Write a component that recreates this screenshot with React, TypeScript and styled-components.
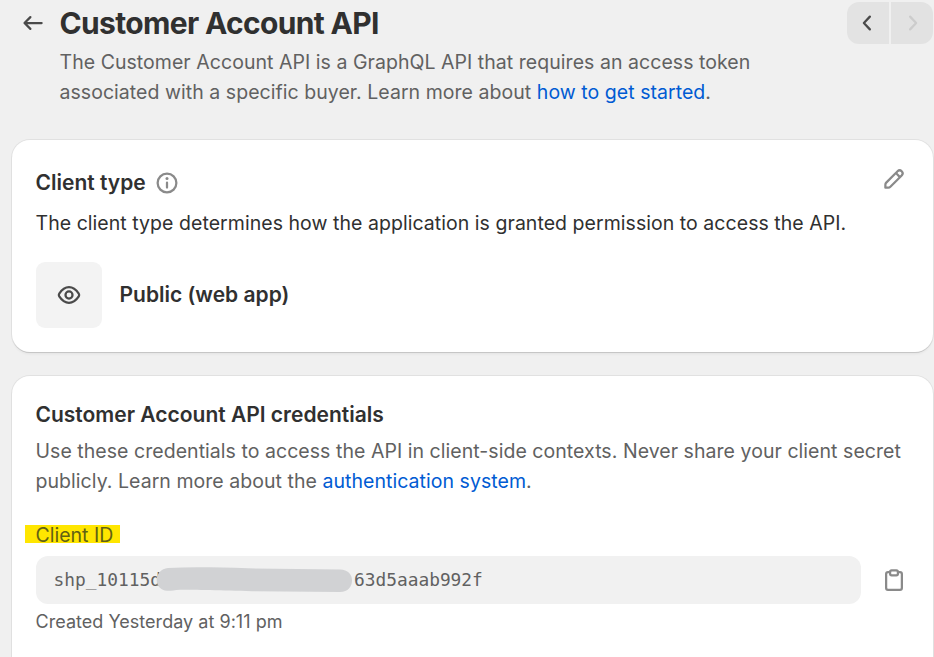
import React from "react";
import styled, { createGlobalStyle } from "styled-components";

const GlobalStyle = createGlobalStyle`
  *, *::before, *::after { box-sizing: border-box; }
  html, body { margin: 0; padding: 0; background: #f0f0f0; }
  body {
    height: 657px;
    overflow: hidden;
    font-family: Inter, "Liberation Sans", sans-serif;
    font-size: 19.5px;
    line-height: 30px;
    color: #303030;
  }
  h1, h2, p { margin: 0; }
`;

const Page = styled.main`
  width: 934px;
  height: 657px;
  overflow: hidden;
  display: flex;
  flex-direction: column;
  gap: 24px;
  padding-left: 12px;
`;

const Header = styled.header`
  flex: none;
  display: flex;
  align-items: flex-start;
  height: 116px;
  padding: 2px 1px 0 6px;
`;

const BackLink = styled.a`
  display: flex;
  margin: 6px 11.5px 0 0;
  color: #4a4a4a;
`;

const HeaderText = styled.div`
  flex: 1;
`;

const Title = styled.h1`
  font-size: 30px;
  line-height: 42px;
  font-weight: 650;
  letter-spacing: -0.66px;
`;

const Body = styled.p<{ $subdued?: boolean }>`
  color: ${(p) => (p.$subdued ? "#616161" : "#303030")};
  letter-spacing: 0.045px;
  white-space: nowrap;
`;

const Intro = styled(Body)`
  padding-top: 3px;
`;

const Link = styled.a`
  color: #005bd3;
`;

const Pager = styled.nav`
  display: flex;
  gap: 2px;
`;

const PagerButton = styled.button<{ $side: "left" | "right" }>`
  width: 42px;
  height: 42px;
  display: flex;
  align-items: center;
  justify-content: center;
  padding: 0;
  border: 0;
  background: #e3e3e3;
  color: #4a4a4a;
  border-radius: ${(p) => (p.$side === "left" ? "12px 0 0 12px" : "0 12px 12px 0")};
  &:disabled { color: #cccccc; background: #e2e2e2; }
`;

const Card = styled.section<{ $height: number }>`
  flex: none;
  width: 921px;
  height: ${(p) => p.$height}px;
  padding: 24px 24px 24px 23.5px;
  background: #fff;
  border-radius: 18px;
  box-shadow: 0 1.5px 0 -0.5px #c6c6c6, 0 0 0 1px rgba(0, 0, 0, 0.06), 0 3px 3px -1px rgba(0, 0, 0, 0.06);
`;

const CardHeader = styled.div`
  display: flex;
  align-items: center;
  height: 38px;
  margin-bottom: 6px;
  gap: 6px;
`;

const Heading = styled.h2`
  font-size: 21px;
  line-height: 30px;
  font-weight: 600;
`;

const SectionHeading = styled(Heading)`
  margin-bottom: 6px;
`;

const IconButton = styled.button<{ $lift?: number }>`
  display: flex;
  margin: 0 0 ${(p) => p.$lift ?? 0}px auto;
  padding: 0;
  border: 0;
  background: none;
  color: #8a8a8a;
`;

const InfoMark = styled.span`
  display: flex;
  color: #8a8a8a;
`;

const TypeRow = styled.div`
  display: flex;
  align-items: center;
  gap: 18px;
  margin-top: 24px;
`;

const Thumbnail = styled.div`
  width: 66px;
  height: 66px;
  display: flex;
  align-items: center;
  justify-content: center;
  border-radius: 9px;
  background: #f3f3f3;
  color: #4a4a4a;
`;

const FieldLabel = styled.div`
  width: max-content;
  height: 18px;
  margin: 29px 0 13px -10.5px;
  padding: 0 6.5px 0 10.5px;
  line-height: 20px;
  background: #ffe600;
  color: #616114;
`;

const FieldRow = styled.div`
  display: flex;
  align-items: center;
`;

const TokenField = styled.div`
  position: relative;
  width: 825px;
  height: 48px;
  display: flex;
  align-items: center;
  padding-left: 18px;
  border-radius: 12px;
  background: #f1f1f1;
  color: #616161;
  font-family: "DejaVu Sans Mono", monospace;
  font-size: 17.85px;
`;

const TokenTail = styled.span`
  margin-left: 193px;
`;

const Redaction = styled.svg`
  position: absolute;
  left: 120.5px;
  top: 10px;
`;

const Caption = styled.p`
  padding-top: 6px;
  font-size: 18px;
  line-height: 24px;
  letter-spacing: 0.03px;
  color: #616161;
`;

function Icon({ children }: { children: React.ReactNode }) {
  return (
    <svg width="30" height="30" viewBox="0 0 20 20" fill="none" stroke="currentColor" strokeWidth="1.5" strokeLinecap="round" strokeLinejoin="round">
      {children}
    </svg>
  );
}

export default function App() {
  return (
    <>
      <GlobalStyle />
      <Page>
        <Header>
          <BackLink>
            <Icon><path d="M15.75 10H4.5M8.25 6.100l-3.900 3.900 3.900 3.900" /></Icon>
          </BackLink>
          <HeaderText>
            <Title>Customer Account API</Title>
            <Intro $subdued>
              The Customer Account API is a GraphQL API that requires an access token
              <br />
              associated with a specific buyer. Learn more about <Link>how to get started</Link>.
            </Intro>
          </HeaderText>
          <Pager>
            <PagerButton $side="left" aria-label="Previous">
              <Icon><path d="M11.25 5.75l-4 4.25 4 4.25" /></Icon>
            </PagerButton>
            <PagerButton $side="right" disabled aria-label="Next">
              <Icon><path d="M8.75 5.75l4 4.25-4 4.25" /></Icon>
            </PagerButton>
          </Pager>
        </Header>

        <Card $height={212}>
          <CardHeader>
            <Heading>Client type</Heading>
            <InfoMark>
              <Icon>
                <circle cx="10" cy="10" r="6.25" />
                <path d="M10 9.75v3.25" />
                <circle cx="10" cy="7" r="1" fill="currentColor" stroke="none" />
              </Icon>
            </InfoMark>
            <IconButton $lift={8} aria-label="Edit">
              <Icon>
                <path
                  fill="currentColor"
                  stroke="none"
                  fillRule="evenodd"
                  d="M15.655 4.344a2.695 2.695 0 0 0-3.81 0l-.599.599-.009-.009-1.06 1.06.008.01-5.88 5.88a2.75 2.75 0 0 0-.805 1.944v1.922a.75.75 0 0 0 .75.75h1.922a2.75 2.75 0 0 0 1.944-.806l7.54-7.539a2.695 2.695 0 0 0 0-3.81Zm-4.409 2.72-5.88 5.88a1.25 1.25 0 0 0-.366.884v1.172h1.172c.331 0 .65-.132.883-.366l5.88-5.88-1.689-1.69Zm2.75.629.599-.599a1.195 1.195 0 1 0-1.69-1.689l-.598.599 1.69 1.689Z"
                />
              </Icon>
            </IconButton>
          </CardHeader>
          <Body>
            The client type determines how the application is granted permission to access the API.
          </Body>
          <TypeRow>
            <Thumbnail>
              <Icon>
                <path d="M3.5 9.05C5 6.8 7.2 4.75 10 4.75s5 2.05 6.5 4.3c.35.55.35 1.35 0 1.9-1.5 2.25-3.7 4.3-6.5 4.3s-5-2.05-6.5-4.3c-.35-.55-.35-1.35 0-1.9Z" />
                <circle cx="10" cy="10" r="2.35" />
              </Icon>
            </Thumbnail>
            <Heading>Public (web app)</Heading>
          </TypeRow>
        </Card>

        <Card $height={320}>
          <SectionHeading>Customer Account API credentials</SectionHeading>
          <Body $subdued>
            Use these credentials to access the API in client-side contexts. Never share your client secret
            <br />
            publicly. Learn more about the <Link>authentication system</Link>.
          </Body>
          <FieldLabel>Client ID</FieldLabel>
          <FieldRow>
            <TokenField>
              <span>shp_10115d</span>
              <TokenTail>63d5aaab992f</TokenTail>
              <Redaction width="198" height="28" viewBox="0 0 198 28">
                <path
                  fill="#d1d2d4"
                  d="M12 2C36 .8 62 1.4 92 2.3L184 3.5C192 3.6 196 8.5 196 14.5S192 26 184 26L96 25.3C66 24.6 38 23.8 24 23.8C18 24.2 15 25 11 24.8C5 24.5 .7 20 .7 14S5 2.4 12 2Z"
                />
              </Redaction>
            </TokenField>
            <IconButton aria-label="Copy">
              <Icon>
                <path d="M7.2 4.75H6A1.25 1.25 0 0 0 4.75 6v9.25A1.25 1.25 0 0 0 6 16.5h8a1.25 1.25 0 0 0 1.25-1.25V6A1.25 1.25 0 0 0 14 4.75h-1.2" />
                <rect x="7.4" y="3.65" width="5.2" height="3.2" rx="1" />
              </Icon>
            </IconButton>
          </FieldRow>
          <Caption>Created Yesterday at 9:11 pm</Caption>
        </Card>
      </Page>
    </>
  );
}
